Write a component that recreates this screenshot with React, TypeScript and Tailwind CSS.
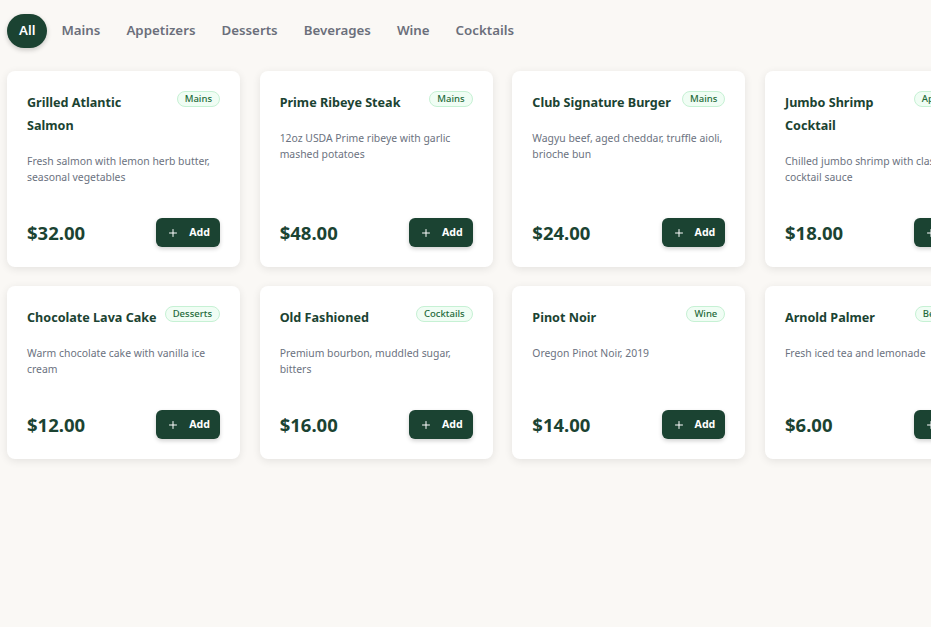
import { Plus } from "lucide-react";

type MenuItem = {
  name: string;
  description: string;
  price: number;
  category: string;
};

const categories = ["All", "Mains", "Appetizers", "Desserts", "Beverages", "Wine", "Cocktails"];

const items: MenuItem[] = [
  { name: "Grilled Atlantic Salmon", description: "Fresh salmon with lemon herb butter, seasonal vegetables", price: 32, category: "Mains" },
  { name: "Prime Ribeye Steak", description: "12oz USDA Prime ribeye with garlic mashed potatoes", price: 48, category: "Mains" },
  { name: "Club Signature Burger", description: "Wagyu beef, aged cheddar, truffle aioli, brioche bun", price: 24, category: "Mains" },
  { name: "Jumbo Shrimp Cocktail", description: "Chilled jumbo shrimp with classic cocktail sauce", price: 18, category: "Appetizers" },
  { name: "Chocolate Lava Cake", description: "Warm chocolate cake with vanilla ice cream", price: 12, category: "Desserts" },
  { name: "Old Fashioned", description: "Premium bourbon, muddled sugar, bitters", price: 16, category: "Cocktails" },
  { name: "Pinot Noir", description: "Oregon Pinot Noir, 2019", price: 14, category: "Wine" },
  { name: "Arnold Palmer", description: "Fresh iced tea and lemonade", price: 6, category: "Beverages" },
];

function MenuCard({ item }: { item: MenuItem }) {
  return (
    <div className="flex flex-col rounded-lg bg-white p-5 shadow-[0_2px_8px_rgba(0,0,0,0.09)]">
      <div className="flex items-start justify-between gap-2">
        <h3 className="text-[12.6px] font-bold leading-[23px] text-[#1b4332]">{item.name}</h3>
        <span className="shrink-0 rounded-full border border-[#c6f1d4] bg-[#f0fdf4] px-[7px] text-[9.5px] leading-[14px] font-medium text-[#1f6b3a]">
          {item.category}
        </span>
      </div>
      <p className="mt-4 text-[10.4px] leading-[16px] text-[#6b7280]">{item.description}</p>
      <div className="mt-auto flex items-center justify-between pt-[33px]">
        <span className="text-[18.5px] font-bold text-[#1b4332]">${item.price.toFixed(2)}</span>
        <button
          type="button"
          className="flex h-[29px] items-center gap-[10px] rounded-md bg-[#1b4332] pl-[11px] pr-[10px] text-[10.6px] font-bold text-white shadow-[0_2px_4px_rgba(0,0,0,0.18)]"
        >
          <Plus className="h-[12px] w-[12px]" strokeWidth={2} />
          Add
        </button>
      </div>
    </div>
  );
}

export default function App() {
  return (
    <div
      className="min-h-screen w-full overflow-hidden bg-[#faf8f5] pl-[7px] pt-[14px]"
      style={{ fontFamily: '"Noto Sans", "Open Sans", sans-serif' }}
    >
      <div className="flex gap-0.5">
        {categories.map((c, i) => (
          <button
            key={c}
            type="button"
            className={
              i === 0
                ? "h-[34px] rounded-full bg-[#1b4332] px-3 text-[13.3px] font-semibold text-white shadow-[0_2px_5px_rgba(0,0,0,0.2)]"
                : "h-[34px] rounded-full px-3 text-[13.3px] font-semibold text-[#6b6f7b]"
            }
          >
            {c}
          </button>
        ))}
      </div>
      <div className="mt-[23px] grid w-max grid-cols-[repeat(4,233px)] gap-x-[19.67px] gap-y-[19px]">
        {items.map((item) => (
          <MenuCard key={item.name} item={item} />
        ))}
      </div>
    </div>
  );
}
